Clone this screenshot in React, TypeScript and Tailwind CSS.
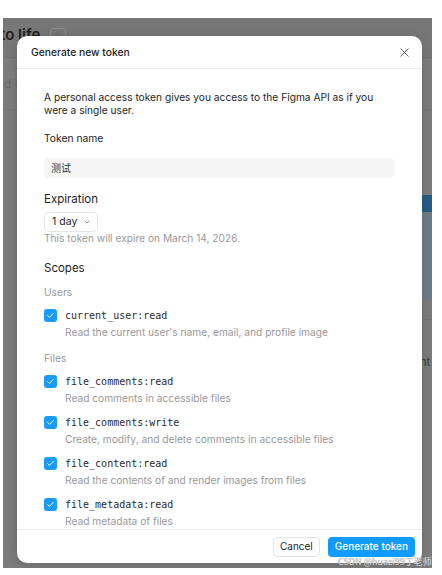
import { X, ChevronDown, Check } from 'lucide-react';

const scopes = [
    { group: 'Users', items: [{ name: 'current_user:read', desc: "Read the current user's name, email, and profile image" }] },
    {
        group: 'Files',
        items: [
            { name: 'file_comments:read', desc: 'Read comments in accessible files' },
            { name: 'file_comments:write', desc: 'Create, modify, and delete comments in accessible files' },
            { name: 'file_content:read', desc: 'Read the contents of and render images from files' },
            { name: 'file_metadata:read', desc: 'Read metadata of files' },
        ],
    },
];

function ScopeRow({ name, desc }: { name: string; desc: string }) {
    return (
        <div className="flex flex-col gap-[4px]">
            <div className="flex items-center gap-[8px] h-[13px]">
                <span className="w-[13px] h-[13px] rounded-[3px] bg-[#1a9bff] flex items-center justify-center">
                    <Check size={9} strokeWidth={2.5} className="text-white" />
                </span>
                <span className="text-[10px] leading-[13px] text-[#2a2a2a] font-['DejaVu_Sans_Mono',monospace]">{name}</span>
            </div>
            <p className="pl-[21px] text-[10.2px] leading-[13px] text-[#999999]">{desc}</p>
        </div>
    );
}

export default function App() {
    return (
        <div className="relative w-[442px] h-[575px] bg-white pt-[18px] pl-[3px] pr-[10px] pb-[7px] font-['Inter',sans-serif] overflow-hidden">
            {/* dimmed page behind the modal */}
            <div className="relative w-full h-full bg-[#7c7c7c] overflow-hidden">
                <div className="h-[40px] bg-[#777777] border-b border-[#707070] flex items-center gap-[10px] -ml-[3px] pb-[6px]">
                    <span className="text-[15px] font-semibold text-[#1e1e1e] leading-none">to life</span>
                    <span className="text-[8px] text-[#6a6a6a] border border-[#8a8a8a] rounded-[3px] px-[3px] leading-[11px]">AI</span>
                </div>
                <div className="h-[52px] border-b border-[#767676] flex items-center pl-[1px]">
                    <span className="text-[12px] text-[#6a6a6a]">d lo</span>
                </div>
                <div className="flex justify-end">
                    <div className="w-[12px] flex flex-col">
                        <div className="h-[85px]" />
                        <div className="h-[17px] bg-[#2a5c88]" />
                        <div className="h-[88px] bg-[#6e7c88]" />
                        <div className="h-[20px] border-b border-[#757575]" />
                        <div className="h-[50px] flex items-end text-[11px] text-[#3a3a3a]">nt</div>
                    </div>
                </div>

                {/* modal */}
                <div className="absolute left-[14px] top-[18px] w-[405px] h-[527px] bg-white rounded-[10px] flex flex-col overflow-hidden shadow-[0_2px_12px_rgba(0,0,0,0.15)]">
                    <div className="h-[33px] shrink-0 border-b border-[#ececec] flex items-center justify-between pl-[14px] pr-[10px] pt-[1px]">
                        <span className="text-[10.3px] font-medium text-[#1e1e1e]">Generate new token</span>
                        <X size={15} strokeWidth={1.2} className="text-[#333333]" />
                    </div>

                    <div className="flex-1 overflow-hidden px-[27px] pt-[22px]">
                        <p className="max-w-[338px] text-[10.2px] leading-[13px] text-[#1e1e1e]">
                            A personal access token gives you access to the Figma API as if you were a single user.
                        </p>

                        <p className="mt-[15px] text-[10.3px] leading-[13px] text-[#1e1e1e]">Token name</p>
                        <div className="mt-[13px] h-[20px] rounded-[5px] bg-[#f5f5f5] flex items-center px-[7px] text-[10px] text-[#333333] font-['Inter','Noto_Sans_CJK_SC',sans-serif]">
                            测试
                        </div>

                        <p className="mt-[13px] text-[11.5px] leading-[16px] text-[#1e1e1e]">Expiration</p>
                        <div className="mt-[5px] h-[20px] w-[54px] rounded-[5px] border border-[#e6e6e6] flex items-center gap-[6px] pl-[7px] text-[10.5px] text-[#1e1e1e]">
                            1 day
                            <ChevronDown size={8} strokeWidth={2} className="text-[#555555]" />
                        </div>
                        <p className="text-[10.2px] leading-[13px] text-[#999999]">This token will expire on March 14, 2026.</p>

                        <p className="mt-[15px] text-[11.5px] leading-[16px] text-[#1e1e1e]">Scopes</p>

                        {scopes.map((g, i) => (
                            <div key={g.group} className={i === 0 ? 'mt-[10px]' : 'mt-[13px]'}>
                                <p className="text-[10.2px] leading-[13px] text-[#999999]">{g.group}</p>
                                <div className="mt-[10px] flex flex-col gap-[11px]">
                                    {g.items.map((s) => (
                                        <ScopeRow key={s.name} name={s.name} desc={s.desc} />
                                    ))}
                                </div>
                            </div>
                        ))}
                    </div>

                    <div className="h-[34px] shrink-0 border-t border-[#ececec] flex items-center justify-end gap-[8px] pr-[7px]">
                        <button className="h-[20px] px-[6px] rounded-[4px] border border-[#e3e3e3] text-[10px] text-[#1e1e1e] bg-white">Cancel</button>
                        <button className="h-[20px] px-[7px] rounded-[4px] bg-[#129bff] text-[10px] font-medium text-white">Generate token</button>
                    </div>
                </div>
            </div>
            <span className="absolute left-[338px] top-[556px] text-[9px] leading-[12px] text-[#d6d6d6] font-['Noto_Sans_CJK_SC',sans-serif] [text-shadow:0_0_1px_#8a8a8a] whitespace-nowrap">
                CSDN @huazi99丁老师
            </span>
        </div>
    );
}
